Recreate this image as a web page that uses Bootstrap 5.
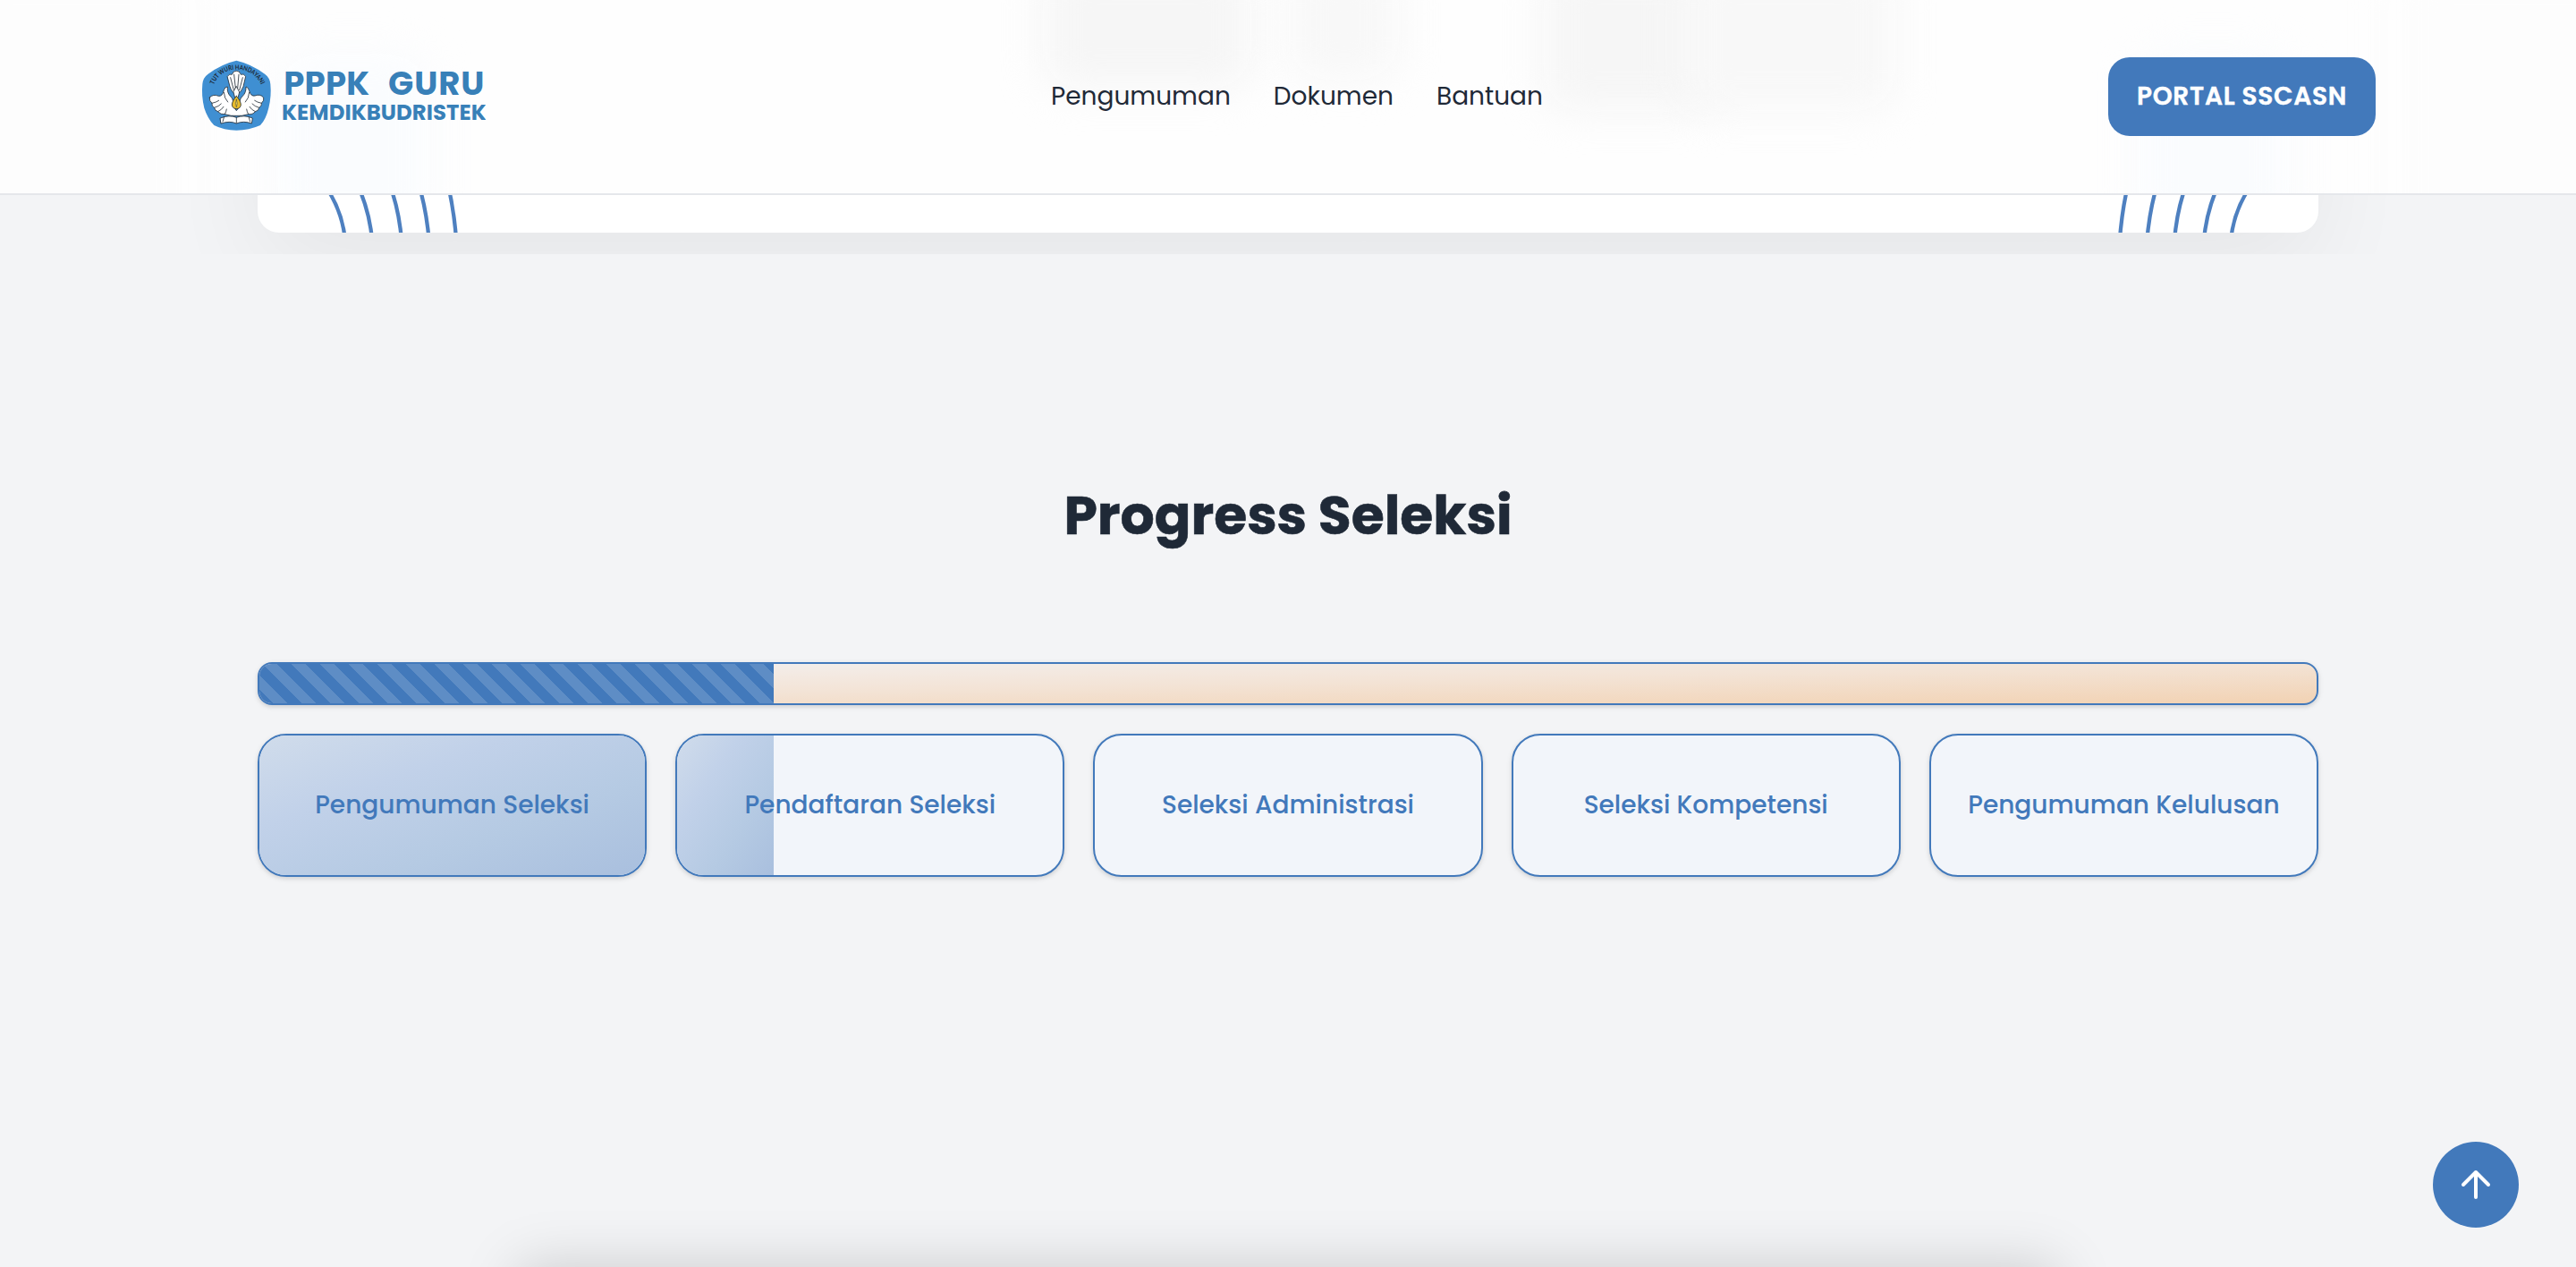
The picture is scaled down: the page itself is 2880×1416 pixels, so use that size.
<!DOCTYPE html>
<html lang="id">
<head>
<meta charset="utf-8">
<meta name="viewport" content="width=device-width, initial-scale=1">
<title>PPPK Guru Kemdikbudristek</title>
<link href="https://cdn.jsdelivr.net/npm/bootstrap@5.3.0/dist/css/bootstrap.min.css" rel="stylesheet">
<style>
  :root { --brand: #4279bb; --ink: #1f2937; }
  html, body { height: 1416px; overflow: hidden; }
  body { background: #f3f4f6; color: var(--ink); font-family: Poppins, Inter, "Open Sans", sans-serif; font-size: 28px; }
  .site-header { height: 218px; border-bottom: 2px solid #e5e7eb; background: #fefefe; padding: 0; overflow: hidden; }
  .site-header-inner { width: 2432px; }
  .haze { position: absolute; filter: blur(22px); border-radius: 30px; }
  .haze-a { left: 1165px; top: -40px; width: 235px; height: 140px; background: #f6f6f6; }
  .haze-b { left: 1440px; top: -40px; width: 125px; height: 130px; background: #f8f8f8; }
  .haze-c { left: 1725px; top: -40px; width: 200px; height: 165px; background: #f6f6f6; }
  .haze-d { left: 1880px; top: -40px; width: 240px; height: 165px; background: #f8f8f8; }
  .haze-e { left: -60px; top: -40px; width: 280px; height: 320px; background: #fdfdfd; }
  .haze-f { left: 2670px; top: -40px; width: 280px; height: 320px; background: #fdfdfd; }
  .haze-g { left: 310px; top: 60px; width: 170px; height: 200px; background: #fafcfe; }
  .haze-h { left: 2390px; top: 60px; width: 170px; height: 200px; background: #fafcfe; }
  .main-nav { gap: 48px; }
  .main-nav .nav-link { color: var(--ink); padding: 0; line-height: 40px; }
  .btn-portal { --bs-btn-color: #fff; --bs-btn-bg: var(--brand); --bs-btn-border-width: 0; width: 299px; height: 88px; border-radius: 24px; font-size: 28px; font-weight: 600; letter-spacing: .7px; padding: 0; -webkit-text-stroke: .4px #fff; }
  .hero { height: 284px; padding-bottom: 24px; overflow: hidden; }
  .page-width { width: 2304px; }
  .hero-panel { background: #fff; border-radius: 0 0 24px 24px; box-shadow: 0 40px 110px rgba(0,0,0,.055); }
  .arcs { fill: none; stroke: #4e80c0; stroke-width: 4.3; }
  .section-title { font-size: 60px; font-weight: 700; line-height: 60px; margin: 262px 0 134px; -webkit-text-stroke: .6px var(--ink); }
  .track { --bs-progress-height: 48px; --bs-progress-border-radius: 16px; border: 2px solid var(--brand); background: linear-gradient(to bottom right, #f3f1f1, #f3e3d5 50%, #f2d2b3); margin-bottom: 32px; }
  .track .progress-bar { background-color: var(--brand); background-size: 32px 32px; background-position: 3px 0; }
  .soft-shadow { box-shadow: 0 2px 6px rgba(0,0,0,.1), 0 2px 4px rgba(0,0,0,.06); }
  .steps { gap: 32px; }
  .step { position: relative; flex: 1 1 0; height: 160px; border: 2px solid var(--brand); border-radius: 32px; background: #f2f5fa; color: var(--brand); font-weight: 500; overflow: hidden; }
  .step-fill { position: absolute; left: 0; top: 0; bottom: 0; background: linear-gradient(to bottom right, #d0dceb, #c1d1e9 33%, #b5cae3 66%, #a9bfde); }
  .step-name { position: relative; }
  .to-top { --bs-btn-bg: var(--brand); --bs-btn-border-width: 0; position: fixed; right: 64px; bottom: 44px; width: 96px; height: 96px; padding: 0; z-index: 20; }
  .next-panel { position: fixed; left: 580px; top: 1416px; width: 1720px; height: 300px; box-shadow: 0 0 60px rgba(0,0,0,.17); }
</style>
<script src="https://cdn.jsdelivr.net/npm/bootstrap@5.3.0/dist/js/bootstrap.bundle.min.js"></script>
</head>
<body>
<header class="site-header navbar fixed-top justify-content-center">
  <div class="haze haze-a"></div><div class="haze haze-b"></div><div class="haze haze-c"></div><div class="haze haze-d"></div>
  <div class="haze haze-e"></div><div class="haze haze-f"></div><div class="haze haze-g"></div><div class="haze haze-h"></div>
  <div class="site-header-inner d-flex align-items-center justify-content-between position-relative">
    <a class="navbar-brand p-0 m-0 d-flex" href="#" aria-label="PPPK Guru Kemdikbudristek">
      <svg width="319" height="100" viewBox="42 24 957 300">
        <path d="M163 53Q212 64 258 98Q275 110 277 132Q281 172 271 212Q262 250 243 270Q205 287 163 287Q121 287 88 270Q66 247 55 212Q45 170 49 132Q51 110 68 98Q114 64 163 53Z" fill="#3f8fd2"/>
        <path id="ring" d="M87 134A80 80 0 0 1 164 83A88 88 0 0 1 249 142" fill="none"/>
        <text font-family="Lato, Inter, sans-serif" font-size="22" font-weight="700" fill="#1c2733"><textPath href="#ring" textLength="200" lengthAdjust="spacingAndGlyphs">TUT WURI HANDAYANI</textPath></text>
        <g fill="#fff" stroke="#26303a" stroke-width="2.5" stroke-linejoin="round" stroke-linecap="round">
          <path d="M133 106Q140 95 148 100Q153 86 163 88Q173 86 178 100Q187 95 194 106L186 140Q180 160 163 168Q147 160 141 140Z"/>
          <path d="M143 110L154 152M155 100L160 146M171 100L167 146M184 110L173 152" fill="none"/>
          <path d="M73 177Q85 164 103 172Q116 174 121 152Q124 141 133 141Q131 160 142 172Q150 178 152 190Q154 212 163 221Q173 212 174 190Q176 178 184 172Q196 160 195 141Q203 142 206 155Q212 174 225 171Q243 164 254 177Q257 187 247 196Q249 206 239 211Q238 222 226 224Q218 235 203 233Q180 240 163 238Q146 240 124 233Q110 235 101 224Q91 222 89 211Q79 206 81 196Q71 188 73 177Z"/>
          <path d="M81 196Q96 193 104 187M89 211Q104 207 112 198M101 224Q114 218 120 208M124 233Q129 224 130 216M247 196Q232 193 224 187M239 211Q224 207 216 198M226 224Q213 218 207 208M203 233Q198 224 197 216M121 160Q122 180 134 192M206 160Q205 180 193 192" fill="none"/>
          <path d="M163 140L173 159L168 178H158L153 159Z"/>
          <path d="M109 246Q140 234 163 244Q187 234 217 246L214 264Q187 254 163 264Q140 254 112 264Z"/>
          <path d="M122 241L117 258M204 241L209 258M163 244V262" fill="none"/>
          <path d="M163 172Q148 190 148 201Q149 214 163 215Q177 214 178 201Q178 190 163 172Z" fill="#e8bc2c"/>
          <path d="M163 184Q157 196 163 209Q169 196 163 184Z" fill="#f6de5c" stroke-width="1.5"/>
        </g>
        <g font-family="Poppins, Inter, sans-serif" font-weight="700" fill="#3880b8">
          <text x="322" y="168" font-size="111" textLength="287">PPPK</text>
          <text x="672" y="168" font-size="111" textLength="322">GURU</text>
          <text x="315" y="251" font-size="73" textLength="686">KEMDIKBUDRISTEK</text>
        </g>
      </svg>
    </a>
    <nav class="main-nav nav">
      <a class="nav-link" href="#">Pengumuman</a>
      <a class="nav-link" href="#">Dokumen</a>
      <a class="nav-link" href="#">Bantuan</a>
    </nav>
    <a class="btn btn-portal d-flex align-items-center justify-content-center" href="#">PORTAL SSCASN</a>
  </div>
</header>

<section class="hero">
  <div class="hero-panel page-width h-100 mx-auto d-flex align-items-end">
    <svg class="arcs" width="2304" height="60" viewBox="288 200 2304 60">
      <g id="arc-set">
        <path d="M357 198Q380.5 229 384.9 261"/>
        <path d="M396 198Q411.5 230 415.2 261"/>
        <path d="M433 198Q445.3 231 448.2 261"/>
        <path d="M466 198Q476 231 478.9 261"/>
        <path d="M499 198Q507 231 509.5 261"/>
      </g>
      <use href="#arc-set" transform="translate(2880 0) scale(-1 1)"/>
    </svg>
  </div>
</section>

<main class="page-width mx-auto">
  <h2 class="section-title text-center">Progress Seleksi</h2>
  <div class="track progress soft-shadow">
    <div class="progress-bar progress-bar-striped" style="width:25%"></div>
  </div>
  <div class="steps d-flex">
    <div class="step soft-shadow d-flex align-items-center justify-content-center"><div class="step-fill" style="width:100%"></div><span class="step-name">Pengumuman Seleksi</span></div>
    <div class="step soft-shadow d-flex align-items-center justify-content-center"><div class="step-fill" style="width:25%"></div><span class="step-name">Pendaftaran Seleksi</span></div>
    <div class="step soft-shadow d-flex align-items-center justify-content-center"><span class="step-name">Seleksi Administrasi</span></div>
    <div class="step soft-shadow d-flex align-items-center justify-content-center"><span class="step-name">Seleksi Kompetensi</span></div>
    <div class="step soft-shadow d-flex align-items-center justify-content-center"><span class="step-name">Pengumuman Kelulusan</span></div>
  </div>
</main>
<div class="next-panel"></div>

<button class="to-top btn rounded-circle d-flex align-items-center justify-content-center" type="button" aria-label="Ke atas">
  <svg width="48" height="48" viewBox="0 0 48 48" fill="none" stroke="#fff" stroke-width="4" stroke-linecap="round" stroke-linejoin="round"><path d="M24 38V10M10 24L24 10L38 24"/></svg>
</button>
</body>
</html>
